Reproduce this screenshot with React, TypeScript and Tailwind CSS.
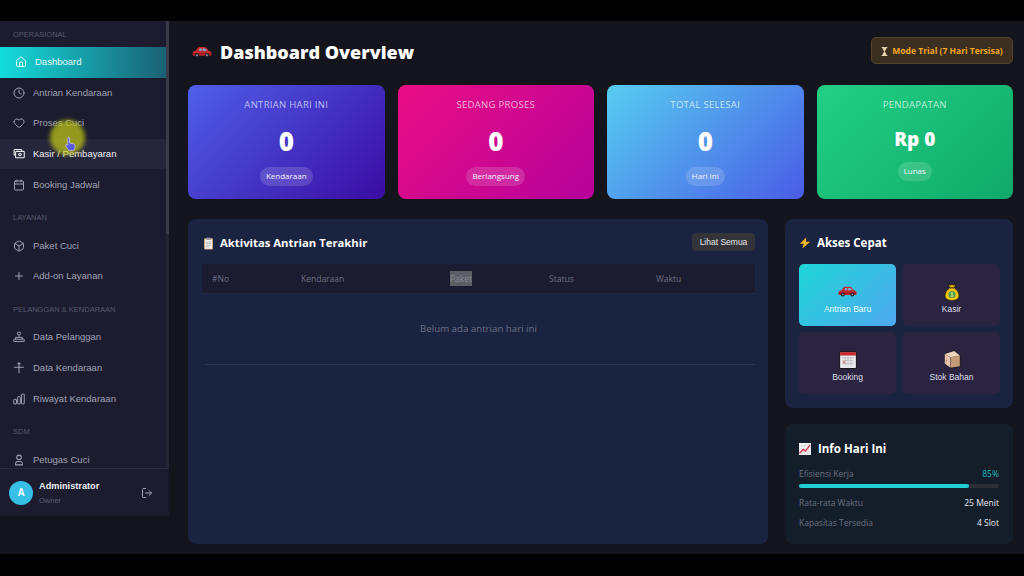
import React from "react";
import { Box, Calendar, Clock, Heart, Home, LogOut, Plus } from "lucide-react";

const CarEmoji = ({ className }: { className?: string }) => (
  <svg viewBox="0 0 32 18" className={className}>
    <path d="M1 11c0-2.500 2-3.600 5-4l3-4.500C9.700 1.400 11 1 12.500 1h7c1.500 0 2.800.5 3.700 1.500L26.500 7c3 .4 4.500 1.600 4.500 4v2.500c0 .8-.7 1.500-1.500 1.500h-27C1.700 15 1 14.300 1 13.500z" fill="#c9262c" />
    <path d="M10.500 7l2-3.800h3V7zM17 3.200h3c.8 0 1.300.3 1.700.8L24 7h-7z" fill="#6fb7d8" />
    <rect x="1" y="11" width="30" height="2" fill="#8f1a20" />
    <circle cx="8" cy="14" r="3.400" fill="#26262e" />
    <circle cx="24" cy="14" r="3.400" fill="#26262e" />
    <circle cx="8" cy="14" r="1.400" fill="#9aa0aa" />
    <circle cx="24" cy="14" r="1.400" fill="#9aa0aa" />
  </svg>
);

const ClipboardEmoji = () => (
  <svg viewBox="0 0 12 16" className="h-[13px] w-[11px]">
    <rect x="0.500" y="1.500" width="11" height="14" rx="1" fill="#c9a87c" />
    <rect x="1.800" y="3" width="8.400" height="11.500" fill="#f1f0ec" />
    <rect x="3.500" y="0.500" width="5" height="3" rx="0.600" fill="#8d8f96" />
    <path d="M3 6h6M3 8h6M3 10h6M3 12h4" stroke="#a5a7ad" strokeWidth="0.800" />
  </svg>
);

const BoltEmoji = () => (
  <svg viewBox="0 0 14 14" className="h-[12px] w-[12px]">
    <path d="M8.500 0.500L1 8h4.500L4 13.500 13 5.500H8z" fill="#f5b81f" />
  </svg>
);

const MoneyEmoji = () => (
  <svg viewBox="0 0 16 18" className="h-[18px] w-[16px]">
    <path d="M4.500 1l2 1.200L8 1l1.600 1.200L11.500 1 10.500 5h-5z" fill="#e7b10e" stroke="#15120a" strokeWidth="0.700" />
    <path d="M5.500 5C2.500 7 1 10 1 12.500 1 16 4 17.500 8 17.500s7-1.500 7-5C15 10 13.500 7 10.500 5z" fill="#f3c20f" stroke="#15120a" strokeWidth="0.700" />
    <circle cx="8" cy="11.500" r="3.600" fill="#3f9a44" />
    <path d="M9.300 10c-.5-.7-2.600-.8-2.600.5s2.700.7 2.700 2c0 1.300-2.200 1.200-2.900.5M8 8.800v5.400" stroke="#f3e58a" strokeWidth="0.700" fill="none" />
  </svg>
);

const CalendarEmoji = () => (
  <svg viewBox="0 0 16 16" className="h-[18px] w-[18px]">
    <rect x="0.500" y="0.500" width="15" height="15" rx="1" fill="#e8e8ea" stroke="#1a1a20" />
    <rect x="1" y="1" width="14" height="3" fill="#c62a2a" />
    <path d="M3 6h10M3 8.500h10M3 11h10M5.500 5.500v7.500M8 5.500v7.500M10.500 5.500v7.500" stroke="#b4b5bb" strokeWidth="0.600" />
    <rect x="3.500" y="8.800" width="2" height="2" fill="#d88" />
  </svg>
);

const BoxEmoji = () => (
  <svg viewBox="0 0 16 17" className="h-[19px] w-[18px]">
    <path d="M1 3l9-2.500L15.500 5v10L6.500 16.500 1 12z" fill="#1a1514" />
    <path d="M1.500 3.500L6.500 6.500v9.300L1.500 12z" fill="#e3c3ac" />
    <path d="M6.800 6.500L15 5v9.500l-8.200 1.400z" fill="#c49a78" />
    <path d="M1.500 3.500L10 1l5 4-8.200 1.500z" fill="#ecd3be" />
    <circle cx="3" cy="9.500" r="0.700" fill="#c77" />
  </svg>
);

const ChartEmoji = () => (
  <svg viewBox="0 0 14 14" className="h-[12px] w-[12px]">
    <rect width="14" height="14" fill="#f2f2f4" />
    <path d="M0 3.500h14M0 7h14M0 10.500h14M3.500 0v14M7 0v14M10.500 0v14" stroke="#cfd0d6" strokeWidth="0.500" />
    <path d="M0.500 12L5 7.500l2.500 2L13 2.500" stroke="#d8364a" strokeWidth="1.600" fill="none" />
  </svg>
);

const HourglassEmoji = () => (
  <svg viewBox="0 0 8 11" className="h-[9px] w-[7px]">
    <path d="M0.500 0.500h7M0.500 10.500h7" stroke="#f1e3c8" strokeWidth="1.200" />
    <path d="M1.500 1h5c0 2.500-2 3-2 4.500s2 2 2 4.500h-5c0-2.500 2-3 2-4.500S1.500 3.500 1.500 1z" fill="#e9d2a5" />
  </svg>
);

const CashIcon = ({ className }: { className?: string }) => (
  <svg viewBox="0 0 16 16" fill="none" stroke="currentColor" strokeWidth="1.400" className={className}>
    <path d="M11.500 3.500V3a1 1 0 0 0-1-1h-8a1 1 0 0 0-1 1v5.500a1 1 0 0 0 1 1H3" />
    <rect x="3.500" y="4.500" width="11.500" height="8.500" rx="1" />
    <circle cx="9.300" cy="8.700" r="1.700" />
  </svg>
);

const PeopleIcon = ({ className }: { className?: string }) => (
  <svg viewBox="0 0 16 16" fill="none" stroke="currentColor" strokeWidth="1.300" className={className}>
    <rect x="5.800" y="1.500" width="4.400" height="3.500" rx="1.500" />
    <path d="M8 5v3M3.500 11V8.500h9V11" />
    <rect x="1" y="11" width="14" height="3" rx="0.500" />
  </svg>
);

const SignIcon = ({ className }: { className?: string }) => (
  <svg viewBox="0 0 16 16" fill="none" stroke="currentColor" strokeWidth="1.400" className={className}>
    <path d="M8 1v14M1.500 7h13M6 3l2-2 2 2" />
  </svg>
);

const BarsIcon = ({ className }: { className?: string }) => (
  <svg viewBox="0 0 16 16" fill="none" stroke="currentColor" strokeWidth="1.300" className={className}>
    <rect x="1" y="8.500" width="3.600" height="6" rx="0.600" />
    <rect x="6.200" y="5" width="3.600" height="9.500" rx="0.600" />
    <rect x="11.400" y="1.500" width="3.600" height="13" rx="0.600" />
  </svg>
);

const PersonIcon = ({ className }: { className?: string }) => (
  <svg viewBox="0 0 16 16" fill="none" stroke="currentColor" strokeWidth="1.400" className={className}>
    <circle cx="8" cy="4.500" r="3" />
    <path d="M3.500 14.500v-1.500a3 3 0 0 1 3-3h3a3 3 0 0 1 3 3v1.500z" />
  </svg>
);

type NavItem = { label: string; icon: React.ElementType };

const sections: { title: string; items: NavItem[] }[] = [
  {
    title: "OPERASIONAL",
    items: [
      { label: "Dashboard", icon: Home },
      { label: "Antrian Kendaraan", icon: Clock },
      { label: "Proses Cuci", icon: Heart },
      { label: "Kasir / Pembayaran", icon: CashIcon },
      { label: "Booking Jadwal", icon: Calendar },
    ],
  },
  {
    title: "LAYANAN",
    items: [
      { label: "Paket Cuci", icon: Box },
      { label: "Add-on Layanan", icon: Plus },
    ],
  },
  {
    title: "PELANGGAN & KENDARAAN",
    items: [
      { label: "Data Pelanggan", icon: PeopleIcon },
      { label: "Data Kendaraan", icon: SignIcon },
      { label: "Riwayat Kendaraan", icon: BarsIcon },
    ],
  },
  {
    title: "SDM",
    items: [{ label: "Petugas Cuci", icon: PersonIcon }],
  },
];

const stats = [
  { title: "ANTRIAN HARI INI", value: "0", tag: "Kendaraan", bg: "bg-[linear-gradient(135deg,#4f5fe8,#3a0ca3)]", text: "text-[#bcc0f5]", big: "h-[36px] mt-[11px] text-[26px]", tagGap: "mt-[7.500px]" },
  { title: "SEDANG PROSES", value: "0", tag: "Berlangsung", bg: "bg-[linear-gradient(135deg,#ea0e84,#b5029a)]", text: "text-[#f7b3d9]", big: "h-[36px] mt-[11px] text-[26px]", tagGap: "mt-[7.500px]" },
  { title: "TOTAL SELESAI", value: "0", tag: "Hari Ini", bg: "bg-[linear-gradient(135deg,#57cdf0,#4a5ce6)]", text: "text-[#c3e6f8]", big: "h-[36px] mt-[11px] text-[26px]", tagGap: "mt-[7.500px]" },
  { title: "PENDAPATAN", value: "Rp 0", tag: "Lunas", bg: "bg-[linear-gradient(135deg,#22d084,#10a96a)]", text: "text-[#b6efd4]", big: "h-[28px] mt-[13px] text-[19px]", tagGap: "mt-[8.500px]" },
];

const Sidebar = () => (
  <aside className="relative flex h-[495px] w-[169px] shrink-0 flex-col bg-[#1c1c2e] font-['Liberation_Sans',sans-serif]">
    <div className="flex min-h-0 flex-1 border-r-[3px] border-[#242433]">
      <nav className="min-w-0 flex-1 overflow-hidden pt-[7px]">
        {sections.map((section) => (
          <div key={section.title} className="mb-[11.500px]">
            <div className="mb-[5px] h-[14px] pl-[13px] text-[7.500px] leading-[14px] text-[#57586b]">{section.title}</div>
            {section.items.map((item) => {
              const Icon = item.icon;
              const active = item.label === "Dashboard";
              const hovered = item.label === "Kasir / Pembayaran";
              return (
                <div
                  key={item.label}
                  className={`flex h-[30.600px] items-center text-[9.500px] ${
                    active
                      ? "bg-[linear-gradient(90deg,#14dcdc,#1a6173)] pl-[15px] text-[#e3fbfb]"
                      : hovered
                        ? "bg-[#26263a] pl-[13px] text-[#eeeef4]"
                        : "pl-[13px] text-[#a0a1b4]"
                  }`}
                >
                  <Icon className="h-[12px] w-[12px] shrink-0" strokeWidth={2} />
                  <span className="ml-[8px]">{item.label}</span>
                </div>
              );
            })}
          </div>
        ))}
      </nav>
    </div>
    <div className="flex h-[48px] shrink-0 items-center border-t border-[#2b2b40] bg-[#1c1c2e] pl-[9px] pr-[16px]">
      <div className="flex h-[24px] w-[24px] items-center justify-center rounded-full bg-[#38bfe6] text-[10px] font-bold text-white">A</div>
      <div className="ml-[6px] flex-1">
        <div className="text-[9.200px] font-bold leading-[13px] text-[#eeeef4]">Administrator</div>
        <div className="mt-[2px] text-[7.500px] leading-[11px] text-[#5f6072]">Owner</div>
      </div>
      <LogOut className="h-[12px] w-[12px] text-[#a0a1b4]" strokeWidth={2} />
    </div>
    {/* scrollbar thumb */}
    <div className="absolute right-0 top-0 h-[213px] w-[3px] bg-[#3a3a48]" />
    {/* pointer highlight from the screen recording */}
    <div className="absolute left-[50px] top-[99px] h-[35px] w-[35px] rounded-full bg-[#c6cf18]/70 blur-[2px]" />
    <svg viewBox="0 0 12 16" className="absolute left-[65px] top-[115px] h-[16px] w-[11px]">
      <path d="M3 1.500c0-1.300 2-1.300 2 0V7l4 .8c1.300.3 2 1 2 2.200l-.5 3.500c-.2 1-.8 1.500-1.800 1.500H5c-.8 0-1.300-.3-1.800-1L.8 10c-.6-1 .6-2 1.500-1.200L3 9.500z" fill="#5b58e0" stroke="#e6e6f5" strokeWidth="0.600" />
    </svg>
  </aside>
);

const StatCard = ({ stat }: { stat: (typeof stats)[number] }) => (
  <div className={`flex h-[114px] flex-col items-center rounded-[8px] pt-[13px] ${stat.bg}`}>
    <div className={`text-[9.500px] font-medium leading-[14px] tracking-[0.3px] ${stat.text}`}>{stat.title}</div>
    <div className={`flex items-center justify-center font-extrabold text-white ${stat.big}`}>{stat.value}</div>
    <div className={`flex h-[19px] items-center rounded-full bg-white/15 px-[6px] text-[8px] text-[#f3f3fb] ${stat.tagGap}`}>{stat.tag}</div>
  </div>
);

const QuickButton = ({ label, icon, active }: { label: string; icon: React.ReactNode; active?: boolean }) => (
  <div
    className={`flex flex-col items-center justify-center rounded-[5px] pt-[7px] font-['Liberation_Sans',sans-serif] ${
      active ? "bg-[linear-gradient(135deg,#1fd6d6,#4fa8f0)] text-[#eafcfc]" : "bg-[#2a2440] text-[#dedee8]"
    }`}
  >
    <div className="flex h-[18px] items-center justify-center">{icon}</div>
    <div className="mt-[2px] text-[8.500px] leading-[12px]">{label}</div>
  </div>
);

const App = () => {
  return (
    <div className="flex h-[576px] w-[1024px] flex-col overflow-hidden bg-black font-['Open_Sans',sans-serif]">
      <div className="h-[21px] shrink-0" />
      <div className="flex h-[533px] shrink-0 bg-[#14141d]">
        <Sidebar />
        <main className="min-w-0 flex-1 pl-[19px] pr-[11px] pt-[16px]">
          <header className="flex h-[27px] items-center justify-between">
            <div className="flex items-center pt-[3px]">
              <CarEmoji className="ml-[4px] h-[12px] w-[20px]" />
              <h1 className="ml-[8px] text-[18px] font-extrabold leading-[24px] text-white">Dashboard Overview</h1>
            </div>
            <div className="flex h-[27px] w-[142px] items-center justify-center gap-[4px] rounded-[5px] border border-[#54432a] bg-[#3a2f20] pt-[1px] text-[8.500px] font-bold text-[#f5a623]">
              <HourglassEmoji />
              <span>Mode Trial (7 Hari Tersisa)</span>
            </div>
          </header>

          <section className="mt-[21px] grid grid-cols-4 gap-[13px]">
            {stats.map((stat) => (
              <StatCard key={stat.title} stat={stat} />
            ))}
          </section>

          <section className="mt-[20px] flex gap-[17px]">
            <div className="h-[325px] w-[580px] shrink-0 rounded-[8px] bg-[#1a2340] pl-[14px] pr-[13px] pt-[14px]">
              <div className="flex h-[18px] items-center justify-between">
                <div className="flex items-center gap-[6px] pl-[1px] pt-[2px] text-[11.300px] font-bold text-white">
                  <ClipboardEmoji />
                  <span>Aktivitas Antrian Terakhir</span>
                </div>
                <div className="flex h-[18px] w-[63px] items-center justify-center rounded-[4px] bg-[#33343a] font-['Liberation_Sans',sans-serif] text-[8.500px] text-[#e8e8ec]">Lihat Semua</div>
              </div>
              <div className="mt-[13px] grid h-[30px] grid-cols-[89px_149px_99px_107px_1fr] items-center border-b border-[#222b45] bg-[#1c1c30] pl-[10px] pt-[1px] text-[8.500px] text-[#6c6d80]">
                <div>#No</div>
                <div>Kendaraan</div>
                <div><span className="bg-[#5d5d66] py-[2px] text-[#8b8b93]">Paket</span></div>
                <div>Status</div>
                <div>Waktu</div>
              </div>
              <div className="ml-[3px] flex h-[71px] items-center justify-center border-b border-[#24364a] pt-[1px] pr-[3px] text-[9.700px] text-[#6a6f85]">Belum ada antrian hari ini</div>
            </div>

            <div className="flex min-w-0 flex-1 flex-col gap-[16px]">
              <div className="h-[189px] rounded-[8px] bg-[#1a2340] px-[14px] pt-[14px]">
                <div className="flex h-[18px] items-center gap-[6px] pt-[2px] text-[11.500px] font-bold text-white">
                  <BoltEmoji />
                  <span>Akses Cepat</span>
                </div>
                <div className="mt-[13px] grid grid-cols-[97px_97px] grid-rows-[62px_62px] gap-x-[7px] gap-y-[6px]">
                  <QuickButton label="Antrian Baru" active icon={<CarEmoji className="h-[11px] w-[19px]" />} />
                  <QuickButton label="Kasir" icon={<MoneyEmoji />} />
                  <QuickButton label="Booking" icon={<CalendarEmoji />} />
                  <QuickButton label="Stok Bahan" icon={<BoxEmoji />} />
                </div>
              </div>

              <div className="h-[120px] rounded-[8px] bg-[#141e2b] px-[14px] pt-[15px]">
                <div className="flex h-[18px] items-center gap-[7px] pt-[1px] text-[11.500px] font-bold text-white">
                  <ChartEmoji />
                  <span>Info Hari Ini</span>
                </div>
                <div className="mt-[11px] flex h-[12px] items-center justify-between text-[8.500px] text-[#6b7080]">
                  <span>Efisiensi Kerja</span>
                  <span className="text-[#1fb8b8]">85%</span>
                </div>
                <div className="mt-[4px] h-[4px] w-full rounded-full bg-[#2b2f38]">
                  <div className="h-full rounded-full bg-[#1fd1d6]" style={{ width: "85%" }} />
                </div>
                <div className="mt-[9.500px] flex h-[12px] items-center justify-between text-[8.500px] text-[#6b7080]">
                  <span>Rata-rata Waktu</span>
                  <span className="text-[#e8e8ee]">25 Menit</span>
                </div>
                <div className="mt-[7.500px] flex h-[12px] items-center justify-between text-[8.500px] text-[#6b7080]">
                  <span>Kapasitas Tersedia</span>
                  <span className="text-[#e8e8ee]">4 Slot</span>
                </div>
              </div>
            </div>
          </section>
        </main>
      </div>
      <div className="flex-1" />
    </div>
  );
};

export default App;
